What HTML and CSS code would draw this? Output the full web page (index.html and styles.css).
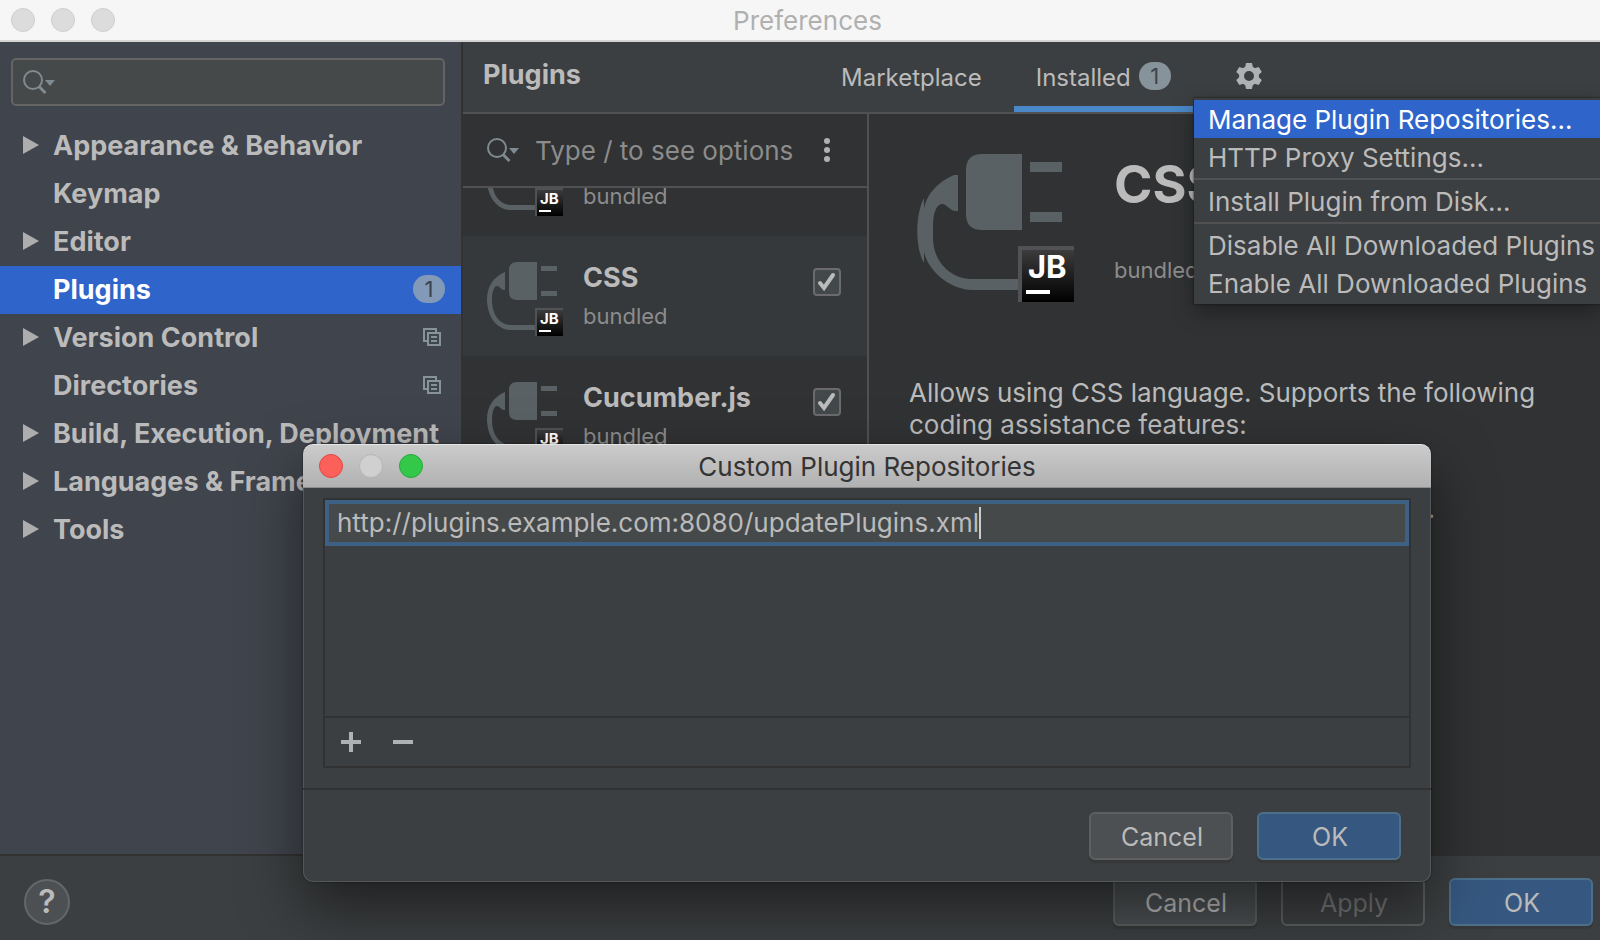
FILE: index.html
```html
<!DOCTYPE html>
<html lang="en">
<head>
<meta charset="utf-8">
<title>Preferences</title>
<link rel="stylesheet" href="styles.css">
</head>
<body>
<svg width="0" height="0" class="defs" aria-hidden="true">
  <defs>
    <linearGradient id="badge" x1="0" y1="0" x2="0" y2="1"><stop offset="0" stop-color="#3c3c3c"/><stop offset="1" stop-color="#000"/></linearGradient>
    <symbol id="search" viewBox="0 0 32 24">
      <circle cx="10" cy="10" r="9" fill="none" stroke="#7f8b91" stroke-width="2"/>
      <path d="M16 16.500 22.500 23" stroke="#7f8b91" stroke-width="3"/>
      <path d="M22 10h10l-5 6z" fill="#7f8b91"/>
    </symbol>
    <symbol id="copy" viewBox="0 0 18 18">
      <path d="M4 13H1V1h12v3M5 5h12v12H5zM8 9h6M8 13h6" fill="none" stroke="#87939a" stroke-width="2"/>
    </symbol>
    <symbol id="plug" viewBox="0 0 76 74">
      <path d="M18 10C6 15 0 25 0 37C0 55 10 68 24 68H48V63H24C13 63 5 53 5 38C5 30 7 24 10 24C13 24 14 28 17 28H18Z"/>
      <path d="M50 0V38H30Q22 38 22 30V8Q22 0 30 0ZM54 4h16v5H54zM54 29h16v5H54z"/>
      <path d="M48 46h28v28H48z" fill="#505256"/>
      <path d="M50 48h26v26H50z" fill="url(#badge)"/>
      <path d="M52 68h12v2H52z" fill="#fff"/>
      <text x="53" y="62" class="jb-small">JB</text>
    </symbol>
  </defs>
</svg>
<div class="window">
  <header class="titlebar">
    <div class="lights"><span class="light"></span><span class="light"></span><span class="light"></span></div>
    <h1 class="window-title">Preferences</h1>
  </header>
  <div class="content">
    <nav class="sidebar" aria-label="Settings">
      <label class="search-box"><svg class="search-icon"><use href="#search"/></svg><input type="text" class="search-input" aria-label="Search settings"></label>
      <ul class="tree">
        <li class="row"><svg class="arrow" viewBox="0 0 16 18"><path d="M0 0 16 9 0 18z"/></svg><a href="#">Appearance &amp; Behavior</a></li>
        <li class="row leaf"><a href="#">Keymap</a></li>
        <li class="row"><svg class="arrow" viewBox="0 0 16 18"><path d="M0 0 16 9 0 18z"/></svg><a href="#">Editor</a></li>
        <li class="row leaf selected"><a href="#">Plugins</a><span class="count count-blue">1</span></li>
        <li class="row"><svg class="arrow" viewBox="0 0 16 18"><path d="M0 0 16 9 0 18z"/></svg><a href="#">Version Control</a><svg class="copy"><use href="#copy"/></svg></li>
        <li class="row leaf"><a href="#">Directories</a><svg class="copy"><use href="#copy"/></svg></li>
        <li class="row"><svg class="arrow" viewBox="0 0 16 18"><path d="M0 0 16 9 0 18z"/></svg><a href="#">Build, Execution, Deployment</a></li>
        <li class="row"><svg class="arrow" viewBox="0 0 16 18"><path d="M0 0 16 9 0 18z"/></svg><a href="#">Languages &amp; Frameworks</a></li>
        <li class="row"><svg class="arrow" viewBox="0 0 16 18"><path d="M0 0 16 9 0 18z"/></svg><a href="#">Tools</a></li>
      </ul>
    </nav>
    <main class="main">
      <div class="head">
        <h2 class="head-title">Plugins</h2>
        <div class="tabs">
          <button class="tab">Marketplace</button>
          <button class="tab active">Installed <span class="count">1</span></button>
        </div>
        <button class="gear" aria-label="Plugin settings">
          <svg viewBox="-13 -13 26 26" width="26" height="26"><g fill="#afb1b3"><path fill-rule="evenodd" d="M0-10A10 10 0 1 0 0 10A10 10 0 1 0 0-10ZM0-5A5 5 0 1 1 0 5A5 5 0 1 1 0-5Z"/><path d="M-3-13h6l1 5h-8zM-3 13h6l1-5h-8z"/><path transform="rotate(60)" d="M-3-13h6l1 5h-8zM-3 13h6l1-5h-8z"/><path transform="rotate(120)" d="M-3-13h6l1 5h-8zM-3 13h6l1-5h-8z"/></g></svg>
        </button>
      </div>
      <div class="panes">
        <section class="list-pane">
          <div class="filter">
            <svg class="search-icon"><use href="#search"/></svg>
            <input type="text" class="filter-input" placeholder="Type / to see options" aria-label="Search plugins">
            <button class="dots" aria-label="Options"><svg viewBox="0 0 6 24" width="6" height="24" fill="#afb1b3"><circle cx="3" cy="3" r="3"/><circle cx="3" cy="12" r="3"/><circle cx="3" cy="21" r="3"/></svg></button>
          </div>
          <ul class="plugins">
            <li class="plugin clipped"><svg class="plug"><use href="#plug"/></svg><div class="info"><span class="vendor">bundled</span></div></li>
            <li class="plugin chosen"><svg class="plug"><use href="#plug"/></svg><div class="info"><h3 class="name">CSS</h3><span class="vendor">bundled</span></div><label class="check"><input type="checkbox" checked aria-label="Enable CSS"><svg viewBox="0 0 28 28"><path d="M7 15l4 5L20 7"/></svg></label></li>
            <li class="plugin"><svg class="plug"><use href="#plug"/></svg><div class="info"><h3 class="name">Cucumber.js</h3><span class="vendor">bundled</span></div><label class="check"><input type="checkbox" checked aria-label="Enable Cucumber.js"><svg viewBox="0 0 28 28"><path d="M7 15l4 5L20 7"/></svg></label></li>
          </ul>
        </section>
        <section class="details">
          <div class="summary">
            <svg class="plug-large" viewBox="0 0 157 148">
              <path d="M7 44C-2 61-2 94 7 109V98C11 116 31 135 55 136H101V125H55C33 125 16 107 16 84V72C16 56 21 50 25 50C30 50 32 56 38 57H41V21H37C23 27 9 39 7 56Z"/>
              <path d="M105 0V76H65Q49 76 49 60V16Q49 0 65 0ZM113 8h32v10h-32zM113 58h32v10h-32z"/>
              <path d="M101 92h56v56h-56z" fill="#505256"/>
              <path d="M105 96h52v52h-52z" fill="url(#badge)"/>
              <path d="M109 136h24v4h-24z" fill="#fff"/>
              <text x="111" y="124" class="jb-large">JB</text>
            </svg>
            <div class="summary-text"><h2 class="big-name">CSS</h2><span class="vendor">bundled</span></div>
          </div>
          <p class="description">Allows using CSS language. Supports the following coding assistance features:</p>
          <p class="trailing">.</p>
        </section>
      </div>
    </main>
  </div>
  <footer class="footer">
    <button class="help" aria-label="Help">?</button>
    <button class="btn">Cancel</button>
    <button class="btn disabled" disabled>Apply</button>
    <button class="btn primary">OK</button>
  </footer>

  <div class="menu" role="menu">
    <button class="item current" role="menuitem">Manage Plugin Repositories…</button>
    <button class="item" role="menuitem">HTTP Proxy Settings…</button>
    <hr class="sep">
    <button class="item" role="menuitem">Install Plugin from Disk…</button>
    <hr class="sep">
    <button class="item" role="menuitem">Disable All Downloaded Plugins</button>
    <button class="item" role="menuitem">Enable All Downloaded Plugins</button>
  </div>

  <div class="dialog" role="dialog" aria-labelledby="dialog-title">
    <header class="dialog-bar">
      <div class="lights"><span class="light red"></span><span class="light off"></span><span class="light green"></span></div>
      <h2 class="dialog-title" id="dialog-title">Custom Plugin Repositories</h2>
    </header>
    <div class="dialog-body">
      <div class="repos">
        <label class="url"><input type="text" class="url-input" aria-label="Repository URL" value="http://plugins.example.com:8080/updatePlugins.xml"><span class="caret"></span></label>
        <div class="tools">
          <button class="tool" aria-label="Add"><svg viewBox="0 0 20 20"><path d="M0 10h20M10 0v20"/></svg></button>
          <button class="tool" aria-label="Remove"><svg viewBox="0 0 20 20"><path d="M0 10h20"/></svg></button>
        </div>
      </div>
    </div>
    <div class="dialog-foot">
      <button class="btn">Cancel</button>
      <button class="btn primary">OK</button>
    </div>
  </div>
</div>
</body>
</html>
```
FILE: styles.css
```css
* { box-sizing: border-box; }
body, h1, h2, h3, p, ul { margin: 0; padding: 0; }
ul { list-style: none; }
body { font-family: Inter, "Liberation Sans", sans-serif; font-size: 26px; line-height: 32px; color: #bbb; background: #3c3f41; }
button, input { font: inherit; color: inherit; margin: 0; padding: 0; border: 0; background: none; outline: 0; }
a { color: inherit; text-decoration: none; }
.defs { position: absolute; }

.window { position: relative; display: flex; flex-direction: column; height: 100vh; overflow: hidden; }
.titlebar { display: grid; grid-template-columns: 1fr auto 1fr; align-items: center; height: 42px; padding-left: 11px; background: #f6f6f6; border-bottom: 2px solid #d4d4d4; }
.window-title { padding: 2px 0 0 4px; font-size: 26px; font-weight: 400; color: #b0b0b0; }
.lights { display: flex; gap: 16px; }
.light { width: 24px; height: 24px; border-radius: 50%; background: #dcdcdc; border: 1px solid #cfcfcf; }
.red { background: #fc605b; border-color: #df4744; }
.off { background: #d0d0d0; border-color: #b5b5b5; }
.green { background: #34c84a; border-color: #25a93a; }

.content { display: flex; flex: 1; min-height: 0; }
.sidebar { width: 463px; background: #40444c; border-right: 2px solid #323232; }
.search-box { display: flex; align-items: center; height: 48px; margin: 16px 16px 16px 11px; padding-left: 10px; gap: 8px; background: #45494a; border: 2px solid #646464; border-radius: 5px; }
.search-icon { flex: none; width: 32px; height: 24px; }
.search-input { flex: 1; min-width: 0; }
.row { display: flex; align-items: center; gap: 14px; height: 48px; padding: 0 16px 2px 23px; font-size: 27px; font-weight: 700; white-space: nowrap; }
.row a { flex: 1; padding-top: 1px; }
.arrow { width: 16px; height: 18px; fill: #adadad; }
.leaf { padding-left: 53px; }
.selected { background: #2f65ca; color: #fff; }
.copy { width: 18px; height: 18px; margin-right: 4px; }
.count { width: 32px; height: 28px; border-radius: 14px; background: #87939a; color: #3c434c; font-size: 22px; font-weight: 400; line-height: 28px; text-align: center; }
.count-blue { background: #8299b8; }

.main { flex: 1; min-width: 0; display: flex; flex-direction: column; background: #313233; }
.head { display: flex; height: 72px; padding-left: 20px; background: #3c3f41; border-bottom: 2px solid #515151; }
.head-title { width: 336px; font-size: 27px; line-height: 66px; }
.tabs { display: flex; }
.tab { display: flex; align-items: center; gap: 8px; padding: 8px 22px 0; font-size: 24px; border-bottom: 6px solid transparent; }
.tab + .tab { margin-left: 10px; }
.tab .count { margin-bottom: 4px; }
.active { border-color: #4a88c7; }
.gear { display: flex; align-items: center; height: 68px; margin-left: 43px; }
.panes { display: flex; flex: 1; min-height: 0; }
.list-pane { width: 406px; border-right: 2px solid #515151; }
.filter { display: flex; align-items: center; height: 74px; padding: 0 37px 0 24px; border-bottom: 2px solid #515151; }
.filter-input { flex: 1; min-width: 0; margin-left: 16px; padding-top: 2px; }
.filter-input::placeholder { color: #8c8c8c; opacity: 1; }
.dots { display: flex; }
.plugin { display: flex; align-items: flex-start; height: 120px; padding: 26px 26px 0 24px; overflow: hidden; }
.clipped { height: 48px; padding: 0 26px 20px 24px; align-items: flex-end; }
.clipped .info { padding-bottom: 12px; }
.clipped .vendor { line-height: 16px; }
.chosen { background: #35393b; }
.plug { flex: none; width: 76px; height: 74px; fill: #596164; }
.info { flex: 1; display: flex; flex-direction: column; padding-left: 20px; }
.name { font-size: 27px; font-weight: 700; line-height: 32px; }
.vendor { font-size: 22px; line-height: 32px; color: #8c8c8c; }
.name + .vendor { margin-top: 6px; }
.check { position: relative; display: grid; width: 28px; height: 28px; margin-top: 6px; }
.check input { appearance: none; grid-area: 1 / 1; width: 28px; height: 28px; background: #43494a; border: 2px solid #6b6b6b; border-radius: 4px; }
.check svg { grid-area: 1 / 1; z-index: 1; width: 28px; height: 28px; fill: none; stroke: #bbb; stroke-width: 4; stroke-linecap: round; pointer-events: none; }
.jb-small { font: 700 15px Inter, sans-serif; fill: #fff; }
.jb-large { font: 700 31px Inter, sans-serif; fill: #fff; }

.details { flex: 1; min-width: 0; padding: 40px 48px 0 40px; }
.summary { display: flex; padding-left: 8px; }
.plug-large { flex: none; width: 157px; height: 148px; fill: #596164; }
.summary-text { display: flex; flex-direction: column; padding-left: 40px; }
.big-name { font-size: 52px; line-height: 62px; }
.summary-text .vendor { margin-top: 38px; }
.description { margin-top: 75px; }
.trailing { margin-top: 52px; text-align: right; padding-right: 117px; }

.footer { display: flex; align-items: center; gap: 24px; height: 86px; padding: 8px 7px 0 24px; border-top: 2px solid #323232; background: #3c3f41; }
.help { width: 46px; height: 46px; margin-right: auto; border: 2px solid #646668; border-radius: 50%; background: #4c5052; font-size: 32px; font-weight: 600; }
.btn { width: 144px; height: 48px; padding: 1px 0 0 2px; border: 2px solid #5e6060; border-radius: 6px; background: #4c5052; font-size: 25px; box-shadow: 0 3px 1px #363839; }
.primary { background: #365880; border-color: #4c708c; }
.disabled { background: #3c3f41; color: #777; box-shadow: none; }

.menu { position: absolute; top: 98px; left: 1194px; right: 0; display: flex; flex-direction: column; padding: 2px 0; background: #3c3f41; box-shadow: 0 0 2px #111, 0 8px 20px rgba(0, 0, 0, .35); white-space: nowrap; }
.item { height: 38px; padding: 1px 0 0 14px; text-align: left; }
.current { background: #2f65ca; color: #fff; }
.sep { width: 100%; height: 2px; margin: 2px 0; border: 0; background: #515151; }

.dialog { position: absolute; top: 444px; left: 303px; right: 169px; display: flex; flex-direction: column; background: #3c3f41; border-radius: 10px; box-shadow: inset 0 0 0 1px #55585a, 0 0 2px rgba(0, 0, 0, .6), 0 26px 60px rgba(0, 0, 0, .5); }
.dialog-bar { display: grid; grid-template-columns: 1fr auto 1fr; align-items: center; height: 44px; padding: 0 16px; border-radius: 10px 10px 0 0; border-top: 1px solid #e4e4e4; border-bottom: 1px solid #8e8e8e; background: linear-gradient(#cbcbcb, #b1b1b1); }
.dialog-title { padding-top: 2px; font-size: 26px; font-weight: 400; color: #343434; }
.dialog-body { padding: 10px 20px 20px; border-bottom: 2px solid #323232; }
.repos { border: 2px solid #323232; }
.url { display: flex; align-items: center; height: 46px; margin-bottom: 170px; padding-left: 8px; border: 4px solid #3d6185; background: #45494a; }
.url-input { field-sizing: content; }
.caret { width: 2px; height: 32px; background: #ccc; }
.tools { display: flex; gap: 32px; height: 50px; padding-left: 16px; align-items: center; border-top: 2px solid #323232; }
.tool { display: flex; }
.tool svg { width: 20px; height: 20px; fill: none; stroke: #afb1b3; stroke-width: 4; }
.dialog-foot { display: flex; justify-content: flex-end; gap: 24px; padding: 22px 30px; }
```
